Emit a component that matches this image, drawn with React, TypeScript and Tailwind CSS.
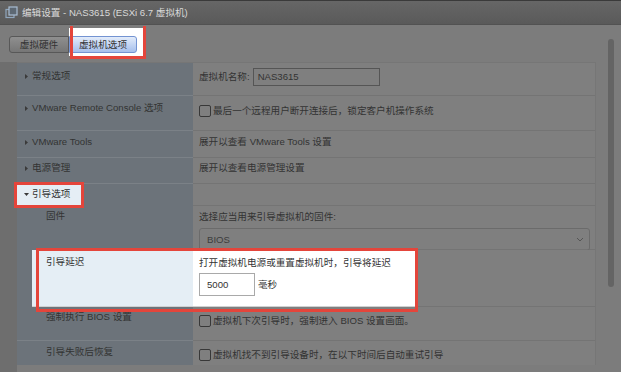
const Tri = ({ open }: { open?: boolean }) => (
  <svg width="5" height="5" viewBox="0 0 5 5" className="shrink-0">
    {open ? <path d="M0 1h5L2.5 4z" fill="#3a3a3a" /> : <path d="M1 0v5l3-2.5z" fill="#3a3a3a" />}
  </svg>
);

const Check = ({ light }: { light?: boolean }) => (
  <span
    className={`inline-block w-[12px] h-[12px] rounded-[2px] border shrink-0 ${
      light ? "border-[#666] bg-white" : "border-[#383838] bg-[#7f7f7f]"
    }`}
  />
);

export default function App() {
  return (
    <div className="w-[621px] h-[372px] overflow-hidden bg-[#7c7c7c] font-['Liberation_Sans','Noto_Sans_CJK_SC',sans-serif] text-[9.6px] leading-[12px] text-[#333]">
      {/* title bar */}
      <div className="h-[25px] flex items-center gap-[4px] pl-[5px] border-t border-[#3a3a3a] border-b border-b-[#525252] bg-gradient-to-b from-[#666] to-[#5a5a5a]">
        <svg width="13" height="13" viewBox="0 0 13 13">
          <rect x="1" y="3.5" width="8" height="8" fill="none" stroke="#8fa6bd" strokeWidth="1.2" />
          <rect x="4" y="1" width="8" height="8" fill="#5d6873" stroke="#a8bdd2" strokeWidth="1.2" />
        </svg>
        <span className="text-[9.6px] text-[#d9d9d9]">编辑设置 - NAS3615 (ESXi 6.7 虚拟机)</span>
      </div>

      <div className="flex">
        <div className="w-[608px]">
          {/* tabs */}
          <div className="flex pl-[9px] pt-[3px]">
            <div className="mt-[8px] h-[17px] w-[60px] flex items-center justify-center border border-[#585858] rounded-l-[3px] bg-gradient-to-b from-[#8f8f8f] to-[#767676]">
              虚拟硬件
            </div>
            <div className="relative bg-white pt-[8px] pb-[3px] pr-[7px]">
              <div className="h-[17px] w-[68px] flex items-center justify-center border border-[#7393d2] rounded-r-[3px] bg-gradient-to-b from-[#e3ecfa] to-[#a6bfec] text-[#333]">
                虚拟机选项
              </div>
              <div className="absolute left-[1px] -top-[2px] -right-[2px] -bottom-[3px] border-l-[3px] border-r-[3px] border-b-[3px] border-[#e4453b]" />
            </div>
          </div>

          <div className="mt-[6px] flex h-[310px]">
            <div className="w-[17px] bg-[#6e6e6e]" />
            {/* table */}
            <div className="self-start w-[579px] border-t border-r border-[#767676]">
              {/* row 1 */}
              <div className="flex h-[33px]">
                <div className="w-[176px] pl-[7px] pt-[7px] bg-[#6c737a] border-b border-[#7b8187]">
                  <div className="flex items-center gap-[3px]">
                    <Tri />
                    <span>常规选项</span>
                  </div>
                </div>
                <div className="flex-1 flex items-start gap-[3px] pl-[6px] pt-[5px] border-b border-[#747474] bg-[#7f7f7f]">
                  <span className="mt-[3px]">虚拟机名称:</span>
                  <div className="h-[18px] w-[127px] border border-[#555] flex items-center pl-[4px]">NAS3615</div>
                </div>
              </div>
              {/* row 2 */}
              <div className="flex h-[35px]">
                <div className="w-[176px] pl-[7px] pt-[6px] bg-[#6c737a] border-b border-[#7b8187]">
                  <div className="flex items-center gap-[3px]">
                    <Tri />
                    <span>VMware Remote Console 选项</span>
                  </div>
                </div>
                <div className="flex-1 flex items-start gap-[2px] pl-[6px] pt-[9px] border-b border-[#747474] bg-[#7f7f7f]">
                  <Check />
                  <span>最后一个远程用户断开连接后，锁定客户机操作系统</span>
                </div>
              </div>
              {/* row 3 */}
              <div className="flex h-[27px]">
                <div className="w-[176px] pl-[7px] pt-[5px] bg-[#6c737a] border-b border-[#7b8187]">
                  <div className="flex items-center gap-[3px]">
                    <Tri />
                    <span>VMware Tools</span>
                  </div>
                </div>
                <div className="flex-1 pl-[6px] pt-[5px] border-b border-[#747474] bg-[#7f7f7f]">展开以查看 VMware Tools 设置</div>
              </div>
              {/* row 4 */}
              <div className="flex h-[26px]">
                <div className="w-[176px] pl-[7px] pt-[4px] bg-[#6c737a] border-b border-[#7b8187]">
                  <div className="flex items-center gap-[3px]">
                    <Tri />
                    <span>电源管理</span>
                  </div>
                </div>
                <div className="flex-1 pl-[6px] pt-[4px] border-b border-[#747474] bg-[#7f7f7f]">展开以查看电源管理设置</div>
              </div>
              {/* row 5 */}
              <div className="flex h-[22px]">
                <div className="relative w-[176px] bg-[#6c737a]">
                  <div className="w-[65px] h-[21px] mt-[1px] bg-[#e5eef5] pl-[7px] pt-[3px] text-[#333]">
                    <div className="flex items-center gap-[3px]">
                      <Tri open />
                      <span>引导选项</span>
                    </div>
                  </div>
                  <div className="absolute -left-[3px] -top-[2px] w-[70px] h-[26px] border-[3px] border-[#e4453b]" />
                </div>
                <div className="flex-1 bg-[#7f7f7f] border-b border-[#747474]" />
              </div>
              {/* row 6 */}
              <div className="flex h-[44px]">
                <div className="w-[176px] pl-[29px] pt-[4px] bg-[#6c737a]">固件</div>
                <div className="flex-1 pl-[6px] pt-[5px] pr-[5px] border-b border-[#747474] bg-[#7f7f7f]">
                  <div>选择应当用来引导虚拟机的固件:</div>
                  <div className="mt-[5px] h-[23px] border border-[#6b6b6b] rounded-[3px] flex items-center justify-between pl-[7px] pr-[5px] text-[#3c3c3c]">
                    <span>BIOS</span>
                    <svg width="8" height="5" viewBox="0 0 8 5">
                      <path d="M1 1l3 3 3-3" fill="none" stroke="#555" strokeWidth="1" />
                    </svg>
                  </div>
                </div>
              </div>
              {/* row 7 highlighted */}
              <div className="relative flex h-[57px]">
                <div className="w-[176px] flex bg-[#6c737a]">
                  <div className="w-[15px]" />
                  <div className="flex-1 bg-[#e5eef5] pl-[14px] pt-[6px] text-[#333] border-b border-[#d0d0d0]">引导延迟</div>
                </div>
                <div className="flex-1 flex bg-[#7f7f7f]">
                  <div className="w-[223px] bg-white pl-[6px] pt-[7px] text-[#333] border-b border-[#d0d0d0]">
                    <div>打开虚拟机电源或重置虚拟机时，引导将延迟</div>
                    <div className="mt-[4px] flex items-center gap-[3px]">
                      <div className="h-[23px] w-[56px] border border-[#a9a9a9] flex items-center pl-[7px]">5000</div>
                      <span>毫秒</span>
                    </div>
                  </div>
                  <div className="flex-1 border-b border-[#747474]" />
                </div>
                <div className="absolute left-[19px] -top-[2px] w-[382px] h-[64px] border-[3px] border-[#e4453b]" />
              </div>
              {/* row 8 */}
              <div className="flex h-[34px]">
                <div className="w-[176px] pl-[29px] pt-[4px] bg-[#6c737a] border-b border-[#7b8187]">强制执行 BIOS 设置</div>
                <div className="flex-1 flex items-start gap-[2px] pl-[6px] pt-[8px] border-b border-[#747474] bg-[#7f7f7f]">
                  <Check />
                  <span>虚拟机下次引导时，强制进入 BIOS 设置画面。</span>
                </div>
              </div>
              {/* row 9 */}
              <div className="flex h-[24px]">
                <div className="w-[176px] pl-[29px] pt-[5px] bg-[#6c737a]">引导失败后恢复</div>
                <div className="flex-1 flex items-start gap-[2px] pl-[6px] pt-[8px] bg-[#7f7f7f]">
                  <Check />
                  <span>虚拟机找不到引导设备时，在以下时间后自动重试引导</span>
                </div>
              </div>
            </div>
          </div>
        </div>
        <div className="pt-[14px]">
          <div className="w-[6px] h-[248px] rounded-full bg-[#646464]" />
        </div>
      </div>
    </div>
  );
}
